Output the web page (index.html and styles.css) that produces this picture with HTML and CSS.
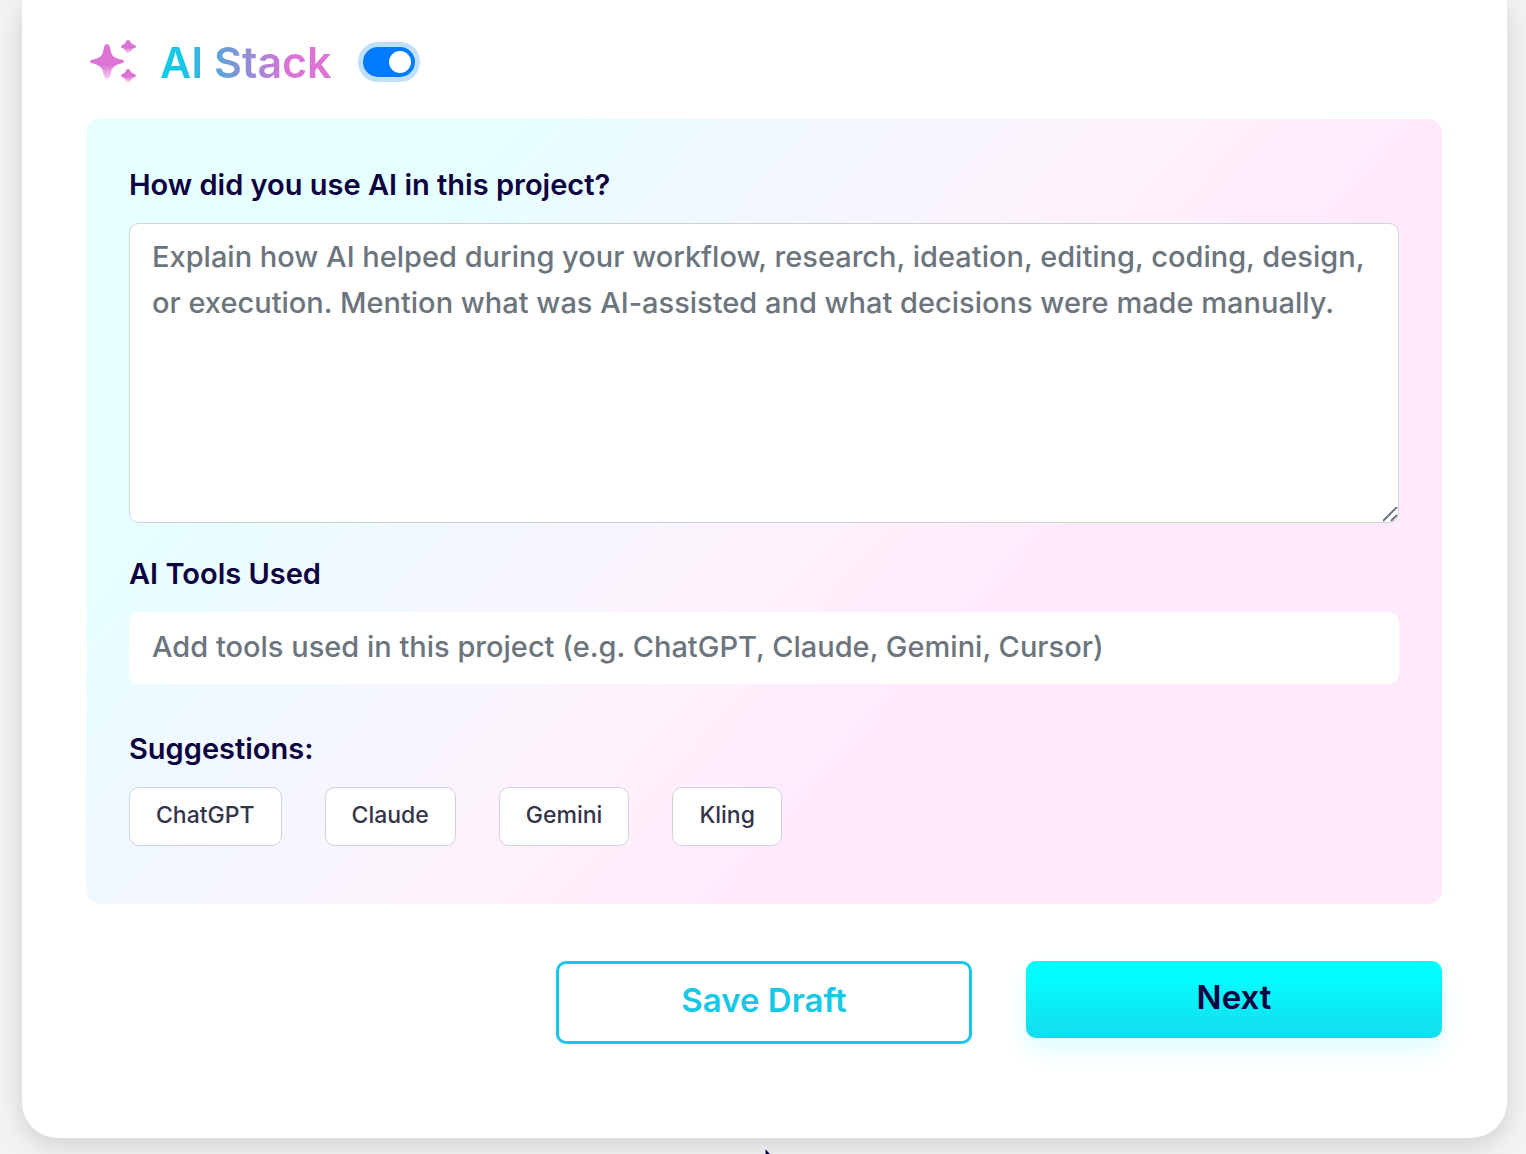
FILE: index.html
```html
<!DOCTYPE html>
<html lang="en">
<head>
<meta charset="utf-8">
<meta name="viewport" content="width=device-width, initial-scale=1">
<title>AI Stack</title>
<link rel="stylesheet" href="styles.css">
</head>
<body>
<main class="card">
  <form class="form">
    <header class="heading">
      <svg class="sparkles" viewBox="0 0 48 44" aria-hidden="true">
        <defs>
          <linearGradient id="fade" x1="0" y1="0" x2="0" y2="1">
            <stop offset="0.6" stop-color="#dc74d6"/>
            <stop offset="1" stop-color="#f9d6f4"/>
          </linearGradient>
        </defs>
        <path d="M17 4C20 4 20 8 21 12C22 16 25 18 29 19C32 20 34 20 34 21.500C34 23 32 23 29 24C24 26 22 28 21 32C20 36 20 39 17 39C14 39 14 36 13 32C12 28 10 26 5 24C2 23 0 23 0 21.500C0 20 2 20 5 19C9 18 12 16 13 12C14 8 14 4 17 4Z"/>
        <path d="M38 0C40.500 0 40.500 3 42 4C44 5 46 5 46 7C46 8 44 8 42 9.500C41 11 40.500 13 38 13C35.500 13 35.500 11 34.500 9.500C32.500 8 31 8 31 7C31 5 32.500 5 34.500 4C36 3 35.500 0 38 0Z"/>
        <path d="M38 29C40.500 29 40.500 32 42 33C44 34 46 34 46 36C46 37 44 37 42 38.500C41 40 40.500 42 38 42C35.500 42 35.500 40 34.500 38.500C32.500 37 31 37 31 36C31 34 32.500 34 34.500 33C36 32 35.500 29 38 29Z"/>
      </svg>
      <h1 class="title"><label for="ai-stack">AI Stack</label></h1>
      <input class="switch" type="checkbox" role="switch" id="ai-stack" checked>
    </header>

    <section class="panel">
      <label class="label" for="usage">How did you use AI in this project?</label>
      <textarea class="field field-area" id="usage" placeholder="Explain how AI helped during your workflow, research, ideation, editing, coding, design, or execution. Mention what was AI-assisted and what decisions were made manually."></textarea>
      <label class="label label-tools" for="tools">AI Tools Used</label>
      <input class="field field-line" id="tools" type="text" placeholder="Add tools used in this project (e.g. ChatGPT, Claude, Gemini, Cursor)">
      <h2 class="label label-suggestions">Suggestions:</h2>
      <div class="chips">
        <button class="chip" type="button">ChatGPT</button>
        <button class="chip" type="button">Claude</button>
        <button class="chip" type="button">Gemini</button>
        <button class="chip" type="button">Kling</button>
      </div>
    </section>

    <div class="actions">
      <button class="button button-outline" type="button">Save Draft</button>
      <button class="button button-primary" type="submit">Next</button>
    </div>
  </form>
</main>
<svg class="pointer" viewBox="0 0 12 18" aria-hidden="true">
  <path d="M1 1V16L5 12H11Z"/>
</svg>
</body>
</html>
```
FILE: styles.css
```css
* {
  box-sizing: border-box;
}

body {
  margin: 0;
  padding: 0 19px 16px 22px;
  background: #f3f3f3;
  color: #0d0140;
  font-family: Inter, "Liberation Sans", sans-serif;
  overflow: hidden;
}

button,
input,
textarea {
  font-family: inherit;
}

.card {
  padding: 32px 65px 94px 64px;
  background: #fff;
  border-radius: 0 0 36px 36px;
  box-shadow: 0 8px 24px rgba(30, 50, 60, 0.17);
}

.heading {
  display: flex;
  align-items: center;
  height: 60px;
}

.sparkles {
  width: 48px;
  height: 44px;
  margin: 0 22px 0 4px;
  fill: url(#fade);
}

.title {
  margin: 0 31px 0 0;
  font-size: 43px;
  line-height: 60px;
  font-weight: 600;
  color: transparent;
  background: linear-gradient(90deg, #14c8e6 12%, #7898d6 42%, #dc74d6 76%);
  background-clip: text;
}

.switch {
  appearance: none;
  display: flex;
  align-items: center;
  justify-content: flex-end;
  width: 52px;
  height: 30px;
  margin: 0;
  padding: 0 4px;
  border-radius: 16px;
  background: #007bff;
  box-shadow: 0 0 0 5px #bfdffb;
}

.switch::before {
  content: "";
  width: 22px;
  height: 22px;
  border-radius: 50%;
  background: #fff;
}

.switch:not(:checked) {
  justify-content: flex-start;
  background: #adb5bd;
}

.panel {
  display: flex;
  flex-direction: column;
  margin-top: 27px;
  padding: 44px 43px 58px;
  border-radius: 14px;
  background: linear-gradient(132deg, #e6ffff 21%, #f2f7ff 36%, #fff1fb 54%, #ffeafc 66%);
}

.label {
  margin: 0 0 16px;
  font-size: 29px;
  line-height: 44px;
  font-weight: 600;
}

.label-tools {
  margin-top: 29px;
}

.label-suggestions {
  margin-top: 43px;
}

.field {
  display: block;
  width: 100%;
  padding: 10px 22px;
  border: 1px solid #ced4da;
  border-radius: 10px;
  background: #fff;
  color: #0d0140;
  font-size: 29px;
  line-height: 46px;
  font-weight: 500;
}

.field::placeholder {
  color: #6c757d;
  opacity: 1;
}

.field-area {
  height: 300px;
  resize: vertical;
}

.field-area::-webkit-resizer {
  background: url("data:image/svg+xml,%3Csvg xmlns='http://www.w3.org/2000/svg' width='15' height='15'%3E%3Cpath d='M0 14L14 0M8 14L14 8' stroke='%236c757d' stroke-width='2'/%3E%3C/svg%3E") no-repeat;
}

.field-line {
  height: 72px;
  padding: 8px 22px 12px;
  border-color: #fff;
}

.chips {
  display: flex;
  flex-wrap: wrap;
  gap: 43px;
}

.chip {
  height: 59px;
  padding: 0 26px 3px;
  border: 1px solid #ced4da;
  border-radius: 10px;
  background: #fff;
  color: #34344a;
  font-size: 23px;
  line-height: 32px;
  font-weight: 500;
}

.actions {
  display: flex;
  justify-content: flex-end;
  align-items: flex-start;
  gap: 54px;
  margin-top: 57px;
}

.button {
  width: 416px;
  padding: 16px 24px 21px;
  border: 0;
  border-radius: 10px;
  font-size: 33px;
  line-height: 40px;
  font-weight: 600;
}

.button-outline {
  border: 3px solid #14c8e6;
  background: #fff;
  color: #14c8e6;
}

.button-primary {
  background: linear-gradient(180deg, #02fcff 20%, #14dcee);
  color: #0d0140;
  box-shadow: 0 12px 24px rgba(0, 240, 255, 0.14);
}

.pointer {
  position: fixed;
  left: 764px;
  bottom: -11px;
  width: 12px;
  height: 18px;
  fill: #0d0140;
  stroke: #fff;
}
```
